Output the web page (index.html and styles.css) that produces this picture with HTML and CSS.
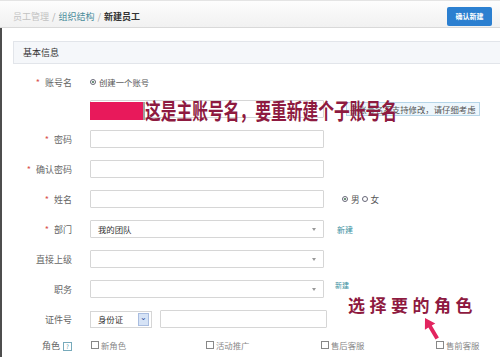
FILE: index.html
```html
<html lang="zh-CN">
<head>
  <meta charset="UTF-8">
  <title>新建员工</title>
  <link rel="stylesheet" href="styles.css">
</head>
<body>
  <header class="topbar">
    <nav class="crumbs">
      <span class="crumb-muted">员工管理</span><span class="sep">/</span><a class="crumb-link">组织结构</a><span class="sep">/</span><b>新建员工</b>
    </nav>
    <button class="btn-primary">确认新建</button>
  </header>

  <main class="sheet">
    <section class="panel">
      <div class="panel-head">基本信息</div>
      <form class="form">
        <div class="row row-first">
          <label class="lbl"><i class="req">*</i>账号名</label>
          <div class="ctl"><span class="radio on"></span>创建一个账号</div>
        </div>
        <div class="row">
          <span class="lbl"></span>
          <div class="ctl"><input class="field"><span class="tip">子账号名不支持修改，请仔细考虑</span></div>
        </div>
        <div class="row">
          <label class="lbl"><i class="req">*</i>密码</label>
          <div class="ctl"><input class="field" type="password"></div>
        </div>
        <div class="row">
          <label class="lbl"><i class="req">*</i>确认密码</label>
          <div class="ctl"><input class="field" type="password"></div>
        </div>
        <div class="row">
          <label class="lbl"><i class="req">*</i>姓名</label>
          <div class="ctl">
            <input class="field">
            <span class="gender"><span class="radio on"></span>男<span class="radio"></span>女</span>
          </div>
        </div>
        <div class="row">
          <label class="lbl"><i class="req">*</i>部门</label>
          <div class="ctl">
            <div class="select field"><span class="val">我的团队</span><span class="caret"></span></div>
            <a class="add-link">新建</a>
          </div>
        </div>
        <div class="row">
          <label class="lbl">直接上级</label>
          <div class="ctl"><div class="select field"><span></span><span class="caret"></span></div></div>
        </div>
        <div class="row">
          <label class="lbl">职务</label>
          <div class="ctl">
            <div class="select field"><span></span><span class="caret"></span></div>
            <a class="add-link add-small">新建</a>
          </div>
        </div>
        <div class="row">
          <label class="lbl">证件号</label>
          <div class="ctl">
            <div class="idtype"><span>身份证</span><span class="idbtn">&#8964;</span></div>
            <input class="field id-field">
          </div>
        </div>
        <div class="row row-last">
          <label class="lbl">角色<span class="help">?</span></label>
          <div class="roles">
            <label class="check"><span class="box"></span>新角色</label>
            <label class="check"><span class="box"></span>活动推广</label>
            <label class="check"><span class="box"></span>售后客服</label>
            <label class="check"><span class="box"></span>售前客服</label>
          </div>
        </div>
      </form>
    </section>
  </main>

  <!-- annotations drawn over the screenshot -->
  <div class="mark-box"></div>
  <div class="note note-main">这是主账号名，要重新建个子账号名</div>
  <div class="note note-role">选择要的角色</div>
  <svg class="pointer" width="16" height="24" viewBox="0 0 16 24">
    <polygon points="1,1 11.3,6.5 7.8,8.6 14.9,20.6 11.5,22.6 4.4,10.6 0.9,12.7" fill="#e2245f"/>
  </svg>
</body>
</html>
```

FILE: styles.css
```css
body {
  margin: 0;
  width: 500px;
  height: 357px;
  overflow: hidden;
  position: relative;
  background: #fff;
  font-family: "Noto Sans CJK SC", "Noto Sans", sans-serif;
  color: #555;
}

.topbar {
  display: flex;
  align-items: center;
  justify-content: space-between;
  height: 28px;
  box-sizing: border-box;
  padding: 5px 8px 1px 13px;
  background: linear-gradient(#fdfdfd, #f1f1f1);
  border-top: 1px solid #e4e4e4;
  border-bottom: 1px solid #d9d9d9;
}

.crumbs {
  font-size: 9px;
  color: #999;
}

.crumb-muted {
  color: #c2c2c2;
}

.sep {
  margin: 0 3px;
  color: #aaa;
}

.crumb-link {
  color: #4b8d9b;
}

.crumbs b {
  color: #333;
}

.btn-primary {
  width: 45px;
  height: 19px;
  padding: 0;
  border: none;
  border-radius: 2px;
  background: #2b7fd0;
  color: #fff;
  font-family: inherit;
  font-size: 7px;
  font-weight: bold;
}

.sheet {
  height: 329px;
  box-sizing: border-box;
  padding: 13px 0 0 11px;
  border-left: 2px solid #4d4d4d;
}

.panel-head {
  height: 23px;
  box-sizing: border-box;
  padding-left: 9px;
  border: 1px solid #e2e5ea;
  border-right: none;
  background: #f5f7fa;
  font-size: 9px;
  line-height: 21px;
  color: #333;
}

.form {
  margin: 0;
  padding-top: 6px;
}

.row {
  display: flex;
  align-items: center;
  height: 30px;
}

.row-first {
  height: 24px;
}

.row-last {
  height: 22px;
}

.lbl {
  flex: none;
  width: 59px;
  margin-right: 18px;
  text-align: right;
  font-size: 9px;
  color: #666;
}

.req {
  font-style: normal;
  color: #d9534f;
  margin-right: 5px;
}

.ctl {
  display: flex;
  align-items: center;
  font-size: 8.4px;
  color: #555;
}

.radio {
  display: inline-block;
  width: 6px;
  height: 6px;
  box-sizing: border-box;
  border: 1px solid #667;
  border-radius: 50%;
  margin-right: 3px;
  position: relative;
}

.radio.on::after {
  content: "";
  position: absolute;
  left: 1px;
  top: 1px;
  width: 2px;
  height: 2px;
  border-radius: 50%;
  background: #3d6d4d;
}

.field {
  width: 234px;
  height: 18px;
  box-sizing: border-box;
  margin: 0;
  padding: 0 7px;
  border: 1px solid #d6d6d6;
  border-radius: 1px;
  background: #fff;
  font-family: inherit;
  font-size: 8.4px;
}

.tip {
  margin-left: 22px;
  height: 14px;
  box-sizing: border-box;
  padding: 0 3px;
  border: 1px solid #b5d5e8;
  background: #edf6fc;
  font-size: 8.4px;
  line-height: 12px;
  color: #555;
  white-space: nowrap;
}

.gender {
  display: flex;
  align-items: center;
  margin-left: 16px;
  font-size: 8.6px;
  color: #555;
}

.gender .radio {
  margin-left: 2px;
}

.select {
  display: flex;
  align-items: center;
  justify-content: space-between;
}

.val {
  color: #333;
}

.caret {
  width: 0;
  height: 0;
  border-left: 2.5px solid transparent;
  border-right: 2.5px solid transparent;
  border-top: 3px solid #999;
}

.add-link {
  margin-left: 13px;
  font-size: 8px;
  color: #3a8fa0;
}

.add-small {
  font-size: 7px;
  align-self: flex-start;
  margin-left: 11px;
}

.idtype {
  display: flex;
  align-items: center;
  justify-content: space-between;
  width: 62px;
  height: 17px;
  box-sizing: border-box;
  padding: 0 2px 0 7px;
  border: 1px solid #d6d6d6;
  font-size: 8.4px;
  color: #333;
}

.idbtn {
  width: 11px;
  height: 13px;
  box-sizing: border-box;
  border: 1px solid #a9bde0;
  background: #d6e3f6;
  color: #2a4f9a;
  font-size: 8px;
  line-height: 6px;
  text-align: center;
}

.id-field {
  width: 167px;
  margin-left: 8px;
}

.help {
  display: inline-block;
  width: 7px;
  height: 7px;
  margin-left: 3px;
  border: 1px solid #7ab;
  font-size: 6px;
  line-height: 7px;
  text-align: center;
  color: #5a9aa8;
  vertical-align: middle;
}

.roles {
  display: grid;
  grid-template-columns: repeat(3, 115px) auto;
  margin-left: 1px;
}

.check {
  display: flex;
  align-items: center;
  font-size: 8.4px;
  color: #888;
}

.box {
  width: 8px;
  height: 8px;
  box-sizing: border-box;
  border: 1px solid #888;
  margin-right: 2px;
}

.mark-box {
  position: absolute;
  left: 90px;
  top: 102px;
  width: 53px;
  height: 18px;
  background: #e8195b;
  border-right: 2px solid #a0a0a0;
}

.note {
  position: absolute;
  white-space: nowrap;
  color: #8e1a40;
  font-weight: bold;
}

.note-main {
  left: 145px;
  top: 96px;
  font-size: 22px;
  line-height: 26px;
  transform: scaleX(0.716);
  transform-origin: left top;
}

.note-role {
  left: 348px;
  top: 294px;
  font-size: 17px;
  line-height: 22px;
  letter-spacing: 4.5px;
}

.pointer {
  position: absolute;
  left: 424px;
  top: 317px;
}
```
